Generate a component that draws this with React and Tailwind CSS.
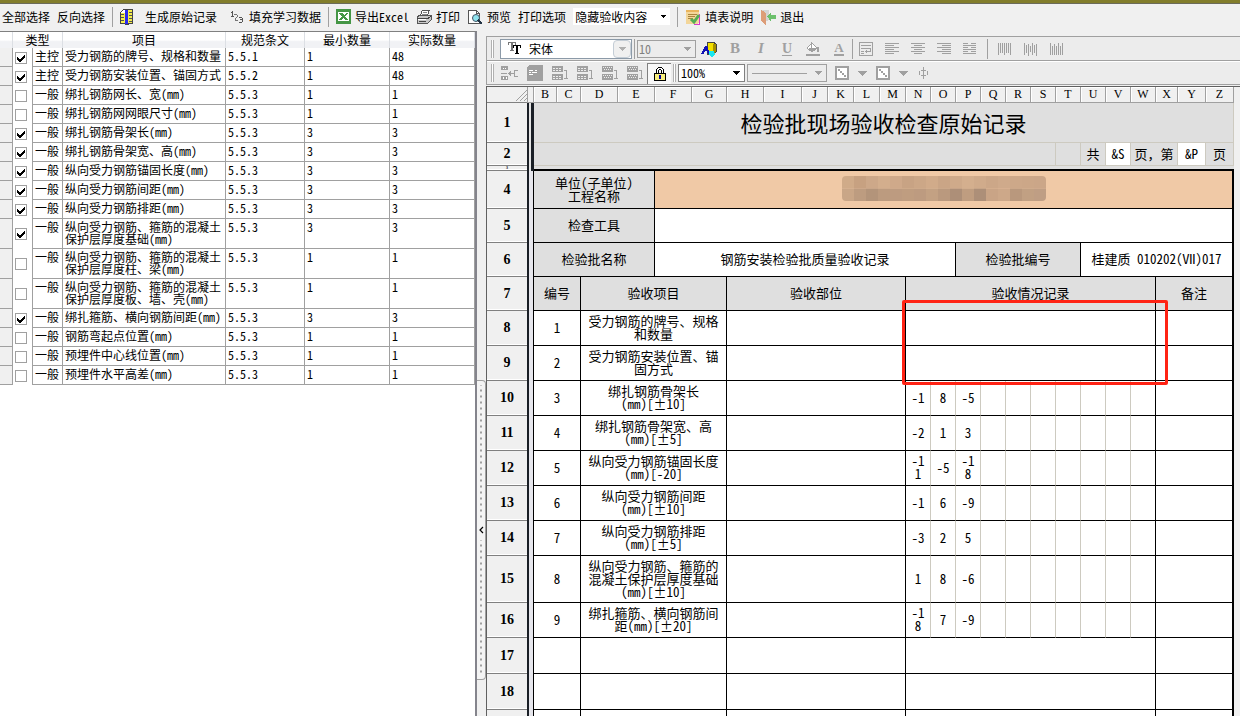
import { Fragment, useState } from "react";

const checkItems = [
  { type: "主控", name: "受力钢筋的牌号、规格和数量", spec: "5.5.1", min: 1, actual: 48, on: true },
  { type: "主控", name: "受力钢筋安装位置、锚固方式", spec: "5.5.2", min: 1, actual: 48, on: true },
  { type: "一般", name: "绑扎钢筋网长、宽(mm)", spec: "5.5.3", min: 1, actual: 1, on: false },
  { type: "一般", name: "绑扎钢筋网网眼尺寸(mm)", spec: "5.5.3", min: 1, actual: 1, on: false },
  { type: "一般", name: "绑扎钢筋骨架长(mm)", spec: "5.5.3", min: 3, actual: 3, on: true },
  { type: "一般", name: "绑扎钢筋骨架宽、高(mm)", spec: "5.5.3", min: 3, actual: 3, on: true },
  { type: "一般", name: "纵向受力钢筋锚固长度(mm)", spec: "5.5.3", min: 3, actual: 3, on: true },
  { type: "一般", name: "纵向受力钢筋间距(mm)", spec: "5.5.3", min: 3, actual: 3, on: true },
  { type: "一般", name: "纵向受力钢筋排距(mm)", spec: "5.5.3", min: 3, actual: 3, on: true },
  { type: "一般", name: "纵向受力钢筋、箍筋的混凝土\n保护层厚度基础(mm)", spec: "5.5.3", min: 3, actual: 3, on: true },
  { type: "一般", name: "纵向受力钢筋、箍筋的混凝土\n保护层厚度柱、梁(mm)", spec: "5.5.3", min: 1, actual: 1, on: false },
  { type: "一般", name: "纵向受力钢筋、箍筋的混凝土\n保护层厚度板、墙、壳(mm)", spec: "5.5.3", min: 1, actual: 1, on: false },
  { type: "一般", name: "绑扎箍筋、横向钢筋间距(mm)", spec: "5.5.3", min: 3, actual: 3, on: true },
  { type: "一般", name: "钢筋弯起点位置(mm)", spec: "5.5.3", min: 1, actual: 1, on: false },
  { type: "一般", name: "预埋件中心线位置(mm)", spec: "5.5.3", min: 1, actual: 1, on: false },
  { type: "一般", name: "预埋件水平高差(mm)", spec: "5.5.3", min: 1, actual: 1, on: false },
];

const sheetColumns = [
  ["B", "w-[23px]"],
  ["C", "w-[24px]"],
  ["D", "w-[37px]"],
  ["E", "w-[37px]"],
  ["F", "w-[37px]"],
  ["G", "w-[35px]"],
  ["H", "w-[37px]"],
  ["I", "w-[38px]"],
  ["J", "w-[26px]"],
  ["K", "w-[26px]"],
  ["L", "w-[26px]"],
  ["M", "w-[26px]"],
  ["N", "w-[25px]"],
  ["O", "w-[25px]"],
  ["P", "w-[25px]"],
  ["Q", "w-[25px]"],
  ["R", "w-[25px]"],
  ["S", "w-[25px]"],
  ["T", "w-[25px]"],
  ["U", "w-[25px]"],
  ["V", "w-[25px]"],
  ["W", "w-[25px]"],
  ["X", "w-[22px]"],
  ["Y", "w-[28px]"],
  ["Z", "w-[28px]"],
];

const records = [
  { row: 8, no: 1, name: "受力钢筋的牌号、规格\n和数量" },
  { row: 9, no: 2, name: "受力钢筋安装位置、锚\n固方式" },
  { row: 10, no: 3, name: "绑扎钢筋骨架长\n(mm)[±10]", values: ["-1", "8", "-5"] },
  { row: 11, no: 4, name: "绑扎钢筋骨架宽、高\n(mm)[±5]", values: ["-2", "1", "3"] },
  { row: 12, no: 5, name: "纵向受力钢筋锚固长度\n(mm)[-20]", values: ["-1\n1", "-5", "-1\n8"] },
  { row: 13, no: 6, name: "纵向受力钢筋间距\n(mm)[±10]", values: ["-1", "6", "-9"] },
  { row: 14, no: 7, name: "纵向受力钢筋排距\n(mm)[±5]", values: ["-3", "2", "5"] },
  { row: 15, no: 8, name: "纵向受力钢筋、箍筋的\n混凝土保护层厚度基础\n(mm)[±10]", values: ["1", "8", "-6"], h: "h-[47px]" },
  { row: 16, no: 9, name: "绑扎箍筋、横向钢筋间\n距(mm)[±20]", values: ["-1\n8", "7", "-9"] },
  { row: 17, h: "h-[36px]" },
  { row: 18, h: "h-[36px]" },
  { row: "", h: "h-[36px]" },
];

/* ---------- icons ---------- */

function Icon({ w = 16, h = 16, className = "", children }) {
  return (
    <svg
      width={w}
      height={h}
      viewBox={`0 0 ${w} ${h}`}
      fill="none"
      shapeRendering="crispEdges"
      className={`shrink-0 ${className}`}
      aria-hidden="true"
    >
      {children}
    </svg>
  );
}

function Triangle({ w = 7, className = "text-black" }) {
  const h = Math.ceil(w / 2);
  return (
    <Icon w={w} h={h} className={className}>
      <path d={`M0 0H${w}L${w / 2} ${h}Z`} fill="currentColor" />
    </Icon>
  );
}

function GenerateIcon() {
  return (
    <Icon w={13} h={16}>
      <path d="M3.500 .5h9v14h-4v1h-3v-1h-5v-11z" fill="#fff" stroke="#444" />
      <path d="M1 4h4v10H1z" fill="#f5ee4a" />
      <path d="M8 1h4v13H8z" fill="#f5ee4a" />
      <path d="M5 1h3v14H5z" fill="#2a2af0" />
      <path d="M1 5.500h3M1 8.500h3M1 11.500h3M9 3.500h3M9 6.500h3M9 9.500h3M9 12.500h3" stroke="#555" />
    </Icon>
  );
}

function NumbersIcon() {
  return (
    <Icon w={14} h={16}>
      <path d="M1 3.500h1M2.500 2v6M1 7.500h3" stroke="#555" />
      <path d="M4 5.500h3M7.500 6v2M6 8.500h1M5.500 9v2M5 11.500h3" stroke="#777" />
      <path d="M9 8.500h3M12.500 9v2M10 10.500h2M12.500 11v2M9 13.500h3" stroke="#555" />
    </Icon>
  );
}

function ExcelIcon() {
  return (
    <Icon w={15} h={15}>
      <path d="M0 0h15v15H0z" fill="#459645" />
      <path d="M2 3h11v9H2z" fill="#fff" />
      <path d="M3 4h3l2 2 3-2h1v1L9 7.500l3 3V11h-2L7.500 9 5 11H3v-1l3-2.500L3 5z" fill="#459645" />
    </Icon>
  );
}

function PrinterIcon() {
  return (
    <Icon>
      <path d="m4.500 6 2-5h7l-2 5" fill="#fff" stroke="#555" />
      <path d="M7 3.500h4M6 5.500h5" stroke="#888" />
      <path d="M1 8l3-2h11v5l-3 3H1z" fill="#c8c8c8" stroke="#555" />
      <path d="M1 9.500h11L15 7M3 12.500h7" stroke="#444" />
      <path d="M2 10h8v1H2z" fill="#fff" />
    </Icon>
  );
}

function PreviewIcon() {
  return (
    <Icon>
      <path d="M1.500 1.500h8l3 3v10h-11z" fill="#fff" stroke="#555" />
      <path d="M9.500 1.500v3h3" stroke="#555" />
      <circle cx="9" cy="9" r="3.500" fill="#8fe3ee" stroke="#456" shapeRendering="auto" />
      <path d="m11 11 4 4" stroke="#234" strokeWidth="2" />
    </Icon>
  );
}

function NoteIcon() {
  return (
    <Icon>
      <path d="M1 1h13v12l-2 2H1z" fill="#f3d69a" />
      <path d="M1 1h13v2H1z" fill="#e9b45c" />
      <path d="M3 5.500h9M3 7.500h7M3 9.500h5" stroke="#a9853f" />
      <path d="M14.500 5v10H9" stroke="#d63ad0" />
      <path d="m6 10 3 3 5-7" stroke="#55ad55" strokeWidth="3" shapeRendering="auto" />
    </Icon>
  );
}

function ExitIcon() {
  return (
    <Icon>
      <path d="M1 1h8v10l-3 1V4z" fill="#d4d4d4" />
      <path d="m1 1 5 3v12l-5-4z" fill="#dd9d78" />
      <path d="m7 7 4-4v3h5v4h-5v3z" fill="#6cc06c" />
    </Icon>
  );
}

function TrueTypeIcon() {
  return (
    <Icon w={13} h={13}>
      <path d="M0 0h8v3H7V1H5v7h1v1H2V8h1V1H1v2H0z" fill="#777" />
      <path d="M5 3h8v3h-1V4h-2v7h1v1H7v-1h1V4H6v2H5z" fill="#000" />
    </Icon>
  );
}

function ColorsIcon() {
  return (
    <Icon>
      <path d="M6 1h6l3 2v8l-3 2H6z" fill="#f3df00" stroke="#444" />
      <path d="M12 3v9l3-1V3z" fill="#a59000" />
      <path d="m0 13 4-8h2l3 8H7l-1-3H4l-1 3z" fill="#1111b5" />
      <path d="M8 10h5l1 3-3 3-3-2z" fill="#19e6ee" />
    </Icon>
  );
}

function BucketIcon() {
  return (
    <Icon>
      <path d="m2 7 5-5 5 5-5 4z" fill="#fff" stroke="currentColor" />
      <path d="M6.500 1v6" stroke="currentColor" />
      <path d="M3 7h9l-5 4zM12 6h2v5h-2zM1 13h14v2H1z" fill="currentColor" />
    </Icon>
  );
}

function WrapIcon() {
  return (
    <Icon>
      <path d="M1.500 1.500h13v13h-13zM3 4.500h10M3 7.500h9.500v3H9M3 10.500h3M3 12.500h3" stroke="currentColor" />
      <path d="m9 8-2 2.500L9 13z" fill="currentColor" />
    </Icon>
  );
}

const alignPaths = {
  left: "M1 2.500h14M1 4.500h9M1 6.500h14M1 8.500h9M1 10.500h14M1 12.500h9",
  center: "M1 2.500h14M4 4.500h8M1 6.500h14M4 8.500h8M1 10.500h14M4 12.500h8",
  right: "M1 2.500h14M6 4.500h9M1 6.500h14M6 8.500h9M1 10.500h14M6 12.500h9",
  justify: "M1 2.500h5M9 2.500h5M1 4.500h13M1 6.500h5M9 6.500h5M1 8.500h13M1 10.500h5M9 10.500h5M1 12.500h13",
  top: "M1.500 2v12M3.500 2v10M5.500 2v10M7.500 2v12M9.500 2v10M11.500 2v10M13.500 2v12",
  middle: "M1.500 2v12M3.500 4v8M5.500 3v12M7.500 5v6M9.500 2v12M11.500 4v8M13.500 3v12",
  bottom: "M1.500 2v12M3.500 5v9M5.500 3v11M7.500 5v9M9.500 2v12M11.500 5v9M13.500 2v12",
};

function AlignIcon({ kind }) {
  return (
    <Icon>
      <path d={alignPaths[kind]} stroke="currentColor" />
    </Icon>
  );
}

function InsertCellIcon() {
  return (
    <Icon w={18}>
      <path d="M0 1h7v4H0zM0 11h7v4H0z" fill="currentColor" />
      <path d="M2 3h1v1H2zM4 3h1v1H4zM2 12h1v2H2zM5 12h1v2H5z" fill="#fff" />
      <path d="M0 8.500h6M8 8.500h5M17 5.500h-4v6h4" stroke="currentColor" />
      <path d="M10 6v5L7 8.500z" fill="currentColor" />
    </Icon>
  );
}

function CommentIcon() {
  return (
    <Icon>
      <path d="M2 0h14v16H0V2z" fill="currentColor" />
      <path d="M2 5.500h4M8 5.500h2M2 7.500h2M5 7.500h5M2 9.500h4" stroke="#fff" />
    </Icon>
  );
}

function TableIcon({ kind }) {
  return (
    <Icon>
      <path d="M0 1h11v6H0zM0 9h11v6H0z" fill="currentColor" />
      <path
        d={
          kind === "row"
            ? "M1 2.500h9M2 4.500h8M1 10.500h9M2 12.500h8"
            : "M1 3.500h9M1 5.500h9M1 11.500h9M1 13.500h9"
        }
        stroke="#ececec"
        strokeDasharray={kind === "row" ? "1 1" : "2 1"}
      />
      <path d="M12 5.500h2.500v7M12 13.500h4" stroke="currentColor" />
    </Icon>
  );
}

function LockIcon() {
  return (
    <Icon w={12} h={14}>
      <path d="M3.500 7V3l2-2h1l2 2v4" stroke="#000" strokeWidth="3" />
      <path d="M3.500 7V3l2-2h1l2 2v4" stroke="#fff" />
      <path d="M.5 6.500h11v7H.5z" fill="#f7ee7c" stroke="#000" />
      <path d="M5 8h2v4H5z" fill="#000099" />
    </Icon>
  );
}

function BorderIcon() {
  return (
    <Icon w={14} h={14}>
      <path d="M0 0h14v14H0z" fill="currentColor" />
      <path d="M2 2h10v10H2z" fill="#fff" />
      <path d="M3 3h2v2H3zM5 5h2v2H5zM7 7h2v2H7zM9 9h2v2H9z" fill="currentColor" />
    </Icon>
  );
}

function PhiIcon() {
  return (
    <Icon w={12} h={14}>
      <path d="M5.500 1v12M3 4.500h5M3 9.500h5M1.500 5v4M9.500 5v4" stroke="currentColor" />
    </Icon>
  );
}

/* ---------- small controls ---------- */

function Divider() {
  return <span className="h-5 w-px shrink-0 bg-[#a0a0a0]" />;
}

function Grip() {
  return <span className="block h-[18px] w-[3px] shrink-0 border-x border-[#b0b0b0] bg-white" />;
}

function TextButton({ children }) {
  return (
    <button type="button" className="flex shrink-0 items-center whitespace-nowrap">
      {children}
    </button>
  );
}

function IconButton({ label, narrow, children }) {
  return (
    <button
      type="button"
      aria-label={label}
      className={`flex h-[22px] shrink-0 items-center justify-center text-[#a0a0a0] ${
        narrow ? "w-[25px]" : "w-[26px]"
      }`}
    >
      {children}
    </button>
  );
}

/* ---------- top menu bar ---------- */

function MenuBar() {
  return (
    <header className="shrink-0 border-t-[3px] border-[#827d2b] bg-[#f0f0f0]">
      <div className="flex h-[28px] items-center gap-[7px] border-t border-[#6b6b5a] pb-0.5 pl-0.5">
        <TextButton>全部选择</TextButton>
        <TextButton>反向选择</TextButton>
        <Divider />
        <TextButton>
          <span className="w-[25px]">
            <GenerateIcon />
          </span>
          生成原始记录
        </TextButton>
        <TextButton>
          <span className="flex w-[25px] justify-center">
            <NumbersIcon />
          </span>
          填充学习数据
        </TextButton>
        <Divider />
        <TextButton>
          <span className="mr-1">
            <ExcelIcon />
          </span>
          导出Excel
        </TextButton>
        <TextButton>
          <span className="mr-1">
            <PrinterIcon />
          </span>
          打印
        </TextButton>
        <TextButton>
          <span className="mr-1">
            <PreviewIcon />
          </span>
          预览
        </TextButton>
        <label htmlFor="print-option" className="shrink-0 whitespace-nowrap">
          打印选项
        </label>
        <div className="flex h-[17px] w-[97px] shrink-0 items-center bg-white pr-1">
          <select id="print-option" className="min-w-0 flex-1 appearance-none bg-transparent pl-0.5 outline-none">
            <option>隐藏验收内容</option>
          </select>
          <Triangle w={5} />
        </div>
        <Divider />
        <TextButton>
          <span className="mr-1">
            <NoteIcon />
          </span>
          填表说明
        </TextButton>
        <TextButton>
          <span className="mr-1">
            <ExitIcon />
          </span>
          退出
        </TextButton>
      </div>
    </header>
  );
}

/* ---------- left list of inspection items ---------- */

function CheckTable() {
  const [checked, setChecked] = useState(checkItems.map((item) => item.on));

  const toggle = (index) => {
    setChecked((prev) => prev.map((v, i) => (i === index ? !v : v)));
  };

  const head = "border-r border-[#dcdfe4] p-0 text-center font-normal bg-linear-to-b from-white from-50% to-[#f1f2f5] to-60%";
  const cell = "border-r border-b border-[#a0a0a0] px-0.5 pt-0.5 pb-[3px] align-top";

  return (
    <section className="w-[477px] shrink-0 overflow-hidden border-t border-r-2 border-t-[#808080] border-r-[#84848c] bg-white">
      <table className="w-full table-fixed border-separate border-spacing-0 leading-[12px]">
        <colgroup>
          <col className="w-[13px]" />
          <col className="w-[20px]" />
          <col className="w-[30px]" />
          <col className="w-[163px]" />
          <col className="w-[79px]" />
          <col className="w-[85px]" />
          <col className="w-[85px]" />
        </colgroup>
        <thead>
          <tr className="h-[16px]">
            <th className={head}></th>
            <th colSpan={2} className={head}>类型</th>
            <th className={head}>项目</th>
            <th className={head}>规范条文</th>
            <th className={head}>最小数量</th>
            <th className={head}>实际数量</th>
          </tr>
        </thead>
        <tbody>
          {checkItems.map((item, index) => (
            <tr key={item.name} className="h-[19px]">
              <td className="border-r border-b border-[#a0a0a0] bg-[#f0f0f0] p-0"></td>
              <td className="border-r border-[#a0a0a0] p-0 pl-0.5 align-middle">
                <label className="grid justify-start">
                  <input
                    type="checkbox"
                    aria-label={item.name}
                    checked={checked[index]}
                    onChange={() => toggle(index)}
                    className="peer size-3 appearance-none border border-[#a0a0a0] bg-white [grid-area:1/1]"
                  />
                  <Icon w={12} h={12} className="invisible [grid-area:1/1] peer-checked:visible">
                    <path d="M2 5v3l3 2 5-5V2L5 7z" fill="#000" />
                  </Icon>
                </label>
              </td>
              <td className={cell}>{item.type}</td>
              <td className={`${cell} whitespace-pre`}>{item.name}</td>
              <td className={cell}>{item.spec}</td>
              <td className={cell}>{item.min}</td>
              <td className={cell}>{item.actual}</td>
            </tr>
          ))}
        </tbody>
      </table>
    </section>
  );
}

function Splitter() {
  const dots =
    "w-full flex-1 bg-[linear-gradient(#a0a0a0_2px,#f4f4f4_2px)] bg-[length:2px_6px] bg-center bg-repeat-y";

  return (
    <div className="flex w-[9px] shrink-0 flex-col bg-[#f0f0f0] pt-[349px]">
      <button
        type="button"
        aria-label="折叠"
        className="flex h-[300px] shrink-0 flex-col rounded-r border border-l-0 border-[#a0a0a0] bg-[#f4f4f4] py-1"
      >
        <span className={dots} />
        <span className="flex h-[20px] w-full items-center justify-center">
          <Icon w={5} h={8}>
            <path d="M4 1 1 4l3 3" stroke="#000" strokeWidth="1.200" shapeRendering="auto" />
          </Icon>
        </span>
        <span className={dots} />
      </button>
    </div>
  );
}

/* ---------- sheet toolbars ---------- */

function FormatBar() {
  return (
    <div className="flex h-[24px] items-center border-b border-[#a0a0a0] pl-1">
      <Grip />
      <div className="ml-[6px] flex h-[20px] w-[132px] shrink-0 items-center border border-[#8c9aa8] bg-white pl-[7px]">
        <TrueTypeIcon />
        <select aria-label="字体" className="ml-2 min-w-0 flex-1 appearance-none bg-transparent outline-none">
          <option>宋体</option>
        </select>
        <span className="flex h-[18px] w-[18px] items-center justify-center rounded-sm border border-[#c4cdd6] bg-[#f0f0f0]">
          <Triangle className="text-[#b0b0b0]" />
        </span>
      </div>
      <span className="ml-0.5 h-5 w-px bg-[#a0a0a0]" />
      <div className="ml-0.5 flex h-[18px] w-[59px] shrink-0 items-center border border-[#a0a0a0] pr-1">
        <select
          aria-label="字号"
          className="min-w-0 flex-1 appearance-none bg-transparent pl-px text-[#808080] outline-none"
        >
          <option>10</option>
        </select>
        <Triangle className="text-[#a0a0a0]" />
      </div>
      <div className="flex items-center">
        <IconButton label="颜色">
          <ColorsIcon />
        </IconButton>
        <IconButton label="加粗">
          <b className="font-[Liberation_Serif,serif] text-[15px]">B</b>
        </IconButton>
        <IconButton label="倾斜">
          <b className="font-[Liberation_Serif,serif] text-[15px] italic">I</b>
        </IconButton>
        <IconButton label="下划线">
          <b className="font-[Liberation_Serif,serif] text-[14px] underline underline-offset-2">U</b>
        </IconButton>
        <IconButton label="填充">
          <BucketIcon />
        </IconButton>
        <IconButton label="字体颜色">
          <b className="border-b-2 font-[Liberation_Serif,serif] text-[13px] leading-[12px]">A</b>
        </IconButton>
        <Divider />
        <IconButton label="自动换行">
          <WrapIcon />
        </IconButton>
        <IconButton label="左对齐">
          <AlignIcon kind="left" />
        </IconButton>
        <IconButton label="居中">
          <AlignIcon kind="center" />
        </IconButton>
        <IconButton label="右对齐">
          <AlignIcon kind="right" />
        </IconButton>
        <IconButton label="分散对齐">
          <AlignIcon kind="justify" />
        </IconButton>
        <span className="mx-1 flex">
          <Divider />
        </span>
        <IconButton label="顶端对齐">
          <AlignIcon kind="top" />
        </IconButton>
        <IconButton label="垂直居中">
          <AlignIcon kind="middle" />
        </IconButton>
        <IconButton label="底端对齐">
          <AlignIcon kind="bottom" />
        </IconButton>
      </div>
    </div>
  );
}

function ViewBar() {
  return (
    <div className="flex h-[24px] items-center border-t border-b border-t-white border-b-[#a0a0a0] pl-1">
      <Grip />
      <div className="ml-[3px] flex items-center">
        <IconButton narrow label="插入">
          <InsertCellIcon />
        </IconButton>
        <IconButton narrow label="批注">
          <CommentIcon />
        </IconButton>
        <IconButton narrow label="插入列">
          <TableIcon kind="col" />
        </IconButton>
        <IconButton narrow label="删除列">
          <TableIcon kind="col" />
        </IconButton>
        <IconButton narrow label="插入行">
          <TableIcon kind="row" />
        </IconButton>
        <IconButton narrow label="删除行">
          <TableIcon kind="row" />
        </IconButton>
      </div>
      <button
        type="button"
        aria-label="锁定"
        className="flex h-[21px] w-[24px] shrink-0 items-center justify-center border-t border-l border-[#808080] bg-[#f8f8f8]"
      >
        <LockIcon />
      </button>
      <span className="mx-0.5">
        <Grip />
      </span>
      <div className="flex h-[18px] w-[67px] shrink-0 items-center border border-[#808080] bg-white pr-1">
        <select aria-label="缩放" className="min-w-0 flex-1 appearance-none bg-transparent pl-0.5 outline-none">
          <option>100%</option>
        </select>
        <Triangle />
      </div>
      <button
        type="button"
        aria-label="线型"
        className="mx-0.5 flex h-[18px] w-[80px] shrink-0 items-center gap-2 border border-[#a0a0a0] px-1"
      >
        <span className="h-px flex-1 bg-[#a0a0a0]" />
        <Triangle className="text-[#a0a0a0]" />
      </button>
      <div className="flex items-center">
        <IconButton narrow label="边框">
          <BorderIcon />
        </IconButton>
        <button type="button" aria-label="边框选项" className="flex w-4 justify-center">
          <Triangle w={9} className="text-[#a0a0a0]" />
        </button>
        <IconButton narrow label="斜线">
          <BorderIcon />
        </IconButton>
        <button type="button" aria-label="斜线选项" className="flex w-4 justify-center">
          <Triangle w={9} className="text-[#a0a0a0]" />
        </button>
        <IconButton narrow label="直径符号">
          <PhiIcon />
        </IconButton>
      </div>
    </div>
  );
}

/* ---------- sheet ---------- */

function RowHead({ n, upper }) {
  return (
    <>
      <th
        scope="row"
        className="border-b border-[#808080] bg-[#f0f0f0] p-0 text-center font-[Liberation_Serif,serif] text-[14px] leading-none font-bold shadow-[inset_0_-1px_0_#fff]"
      >
        {n === 3 ? <span className="block text-[4px] leading-[4px]">3</span> : n}
      </th>
      <td
        className={
          upper
            ? "border-r-[3px] border-l-2 border-[#1a1f26] bg-[#e4e4e4] p-0"
            : "border-r border-l-2 border-r-black border-l-[#1a1f26] bg-[#e6e6ec] p-0"
        }
      ></td>
    </>
  );
}

const line = "border-r border-b border-black p-0 pb-0.5";
const faint = "border-r border-b border-[#cdcac0] bg-[#dfdfdf] p-0 pb-0.5";
const edge = "border-r-2 border-b border-black p-0 pb-0.5";

// colours of the blocks that cover the project name
const mosaic = [
  ["#d0ab89", "#c7a181", "#cda889", "#d3ae8d", "#cfa98a", "#c8a384", "#cca787", "#d1ab8a", "#caa586", "#cfaa8a", "#d4af8e", "#d0ab8b", "#cca788", "#cfaa8b", "#cda889", "#cca788", "#cba688"],
  ["#c9a687", "#bd9c80", "#b3947a", "#bc9b7f", "#bd9b80", "#bf9d80", "#bd9b80", "#c3a183", "#ba997e", "#ad8f78", "#bf9d80", "#ad8f78", "#c9a486", "#cda889", "#b9987d", "#c1a083", "#bf9e84"],
];

function Mosaic() {
  return (
    <svg width="204" height="25" viewBox="0 0 204 24" preserveAspectRatio="none" className="mx-auto rounded-sm" aria-hidden="true">
      {mosaic.map((row, y) => (
        <Fragment key={y}>
          {row.map((c, x) => (
            <rect key={x} x={x * 12} y={y * 12} width="12" height="12" fill={c} />
          ))}
        </Fragment>
      ))}
    </svg>
  );
}

function RecordRow({ record }) {
  const { row, no, name, values, h = "h-[35px]" } = record;

  return (
    <tr className={`${h} bg-white`}>
      <RowHead n={row} />
      <td colSpan={2} className={line}>{no}</td>
      <td colSpan={4} className={line}>{name}</td>
      <td colSpan={6} className={line}></td>
      {values ? (
        Array.from({ length: 10 }, (_, i) => (
          <td
            key={i}
            className={
              i === 9
                ? "border-r border-b border-black p-0"
                : "border-r border-b border-r-[#cdcac0] border-b-black p-0 pb-0.5"
            }
          >
            {values[i]}
          </td>
        ))
      ) : (
        <td colSpan={10} className={`${line} relative`}>
          {row === 8 && (
            <div className="pointer-events-none absolute -top-[11px] -right-[13px] -left-[4px] z-10 h-[85px] rounded-xs border-[3px] border-[#ff2314]" />
          )}
        </td>
      )}
      <td colSpan={3} className={edge}></td>
    </tr>
  );
}

function Sheet() {
  return (
    <div className="min-h-0 flex-1 overflow-hidden border-t border-l border-[#606060] bg-[#f0f0f0] pr-[6px]">
      <table className="w-full table-fixed border-separate border-spacing-0 text-center text-[13px] leading-[13px] whitespace-pre">
        <colgroup>
          <col className="w-[40px]" />
          <col className="w-[7px]" />
          {sheetColumns.map(([name, width]) => (
            <col key={name} className={width} />
          ))}
        </colgroup>
        <thead>
          <tr className="h-[16px]">
            <th className="border-b border-[#808080] p-0">
              <Icon w={12} h={12} className="ml-auto">
                <path d="M1 12 12 1M5 12l7-7M9 12l3-3" stroke="#a0a0a0" shapeRendering="auto" />
              </Icon>
            </th>
            <th className="border-r border-b border-l border-[#a0a0a0] p-0"></th>
            {sheetColumns.map(([name]) => (
              <th
                key={name}
                scope="col"
                className="border-r border-b border-[#a0a0a0] p-0 font-[Liberation_Serif,serif] text-[12px] font-normal shadow-[inset_1px_1px_0_#fff]"
              >
                {name}
              </th>
            ))}
          </tr>
        </thead>
        <tbody>
          <tr className="h-[40px]">
            <RowHead n={1} upper />
            <td colSpan={25} className={`${faint} text-[22px] leading-none font-medium`}>检验批现场验收检查原始记录</td>
          </tr>
          <tr className="h-[23px]">
            <RowHead n={2} upper />
            <td colSpan={18} className={faint}></td>
            <td className={faint}></td>
            <td className={faint}>共</td>
            <td className="border-r border-b border-[#cdcac0] bg-white p-0 pb-0.5">&amp;S</td>
            <td colSpan={2} className={faint}>页，第</td>
            <td className="border-r border-b border-[#cdcac0] bg-white p-0 pb-0.5">&amp;P</td>
            <td className={faint}>页</td>
          </tr>
          <tr className="h-[5px]">
            <RowHead n={3} upper />
            <td colSpan={25} className="border-b-2 border-black bg-[#dfdfdf] p-0"></td>
          </tr>
          <tr className="h-[38px]">
            <RowHead n={4} />
            <td colSpan={4} className={`${line} bg-[#dfdfdf]`}>{"单位(子单位)\n工程名称"}</td>
            <td colSpan={21} className={`${edge} bg-[#f0c9a6]`}>
              <Mosaic />
            </td>
          </tr>
          <tr className="h-[34px]">
            <RowHead n={5} />
            <td colSpan={4} className={`${line} bg-[#dfdfdf]`}>检查工具</td>
            <td colSpan={21} className={`${edge} bg-white`}></td>
          </tr>
          <tr className="h-[34px]">
            <RowHead n={6} />
            <td colSpan={4} className={`${line} bg-[#dfdfdf]`}>检验批名称</td>
            <td colSpan={10} className={`${line} bg-white`}>钢筋安装检验批质量验收记录</td>
            <td colSpan={5} className={`${line} bg-[#dfdfdf]`}>检验批编号</td>
            <td colSpan={6} className={`${edge} bg-white`}>桂建质 010202(Ⅶ)017</td>
          </tr>
          <tr className="h-[34px] bg-[#dfdfdf]">
            <RowHead n={7} />
            <td colSpan={2} className={line}>编号</td>
            <td colSpan={4} className={line}>验收项目</td>
            <td colSpan={6} className={line}>验收部位</td>
            <td colSpan={10} className={line}>验收情况记录</td>
            <td colSpan={3} className={edge}>备注</td>
          </tr>
          {records.map((record) => (
            <RecordRow key={record.row} record={record} />
          ))}
        </tbody>
      </table>
    </div>
  );
}

export default function App() {
  return (
    <div className="flex h-screen flex-col overflow-hidden bg-[#f0f0f0] font-['Noto_Sans_Mono_CJK_SC','Noto_Sans_CJK_SC',sans-serif] text-[12px] text-black">
      <MenuBar />
      <main className="flex min-h-0 flex-1">
        <CheckTable />
        <Splitter />
        <section className="flex min-w-0 flex-1 flex-col pt-[5px]">
          <div className="mb-px border-t border-l border-[#a0a0a0] bg-[#ececec]">
            <FormatBar />
            <ViewBar />
          </div>
          <Sheet />
        </section>
      </main>
    </div>
  );
}
